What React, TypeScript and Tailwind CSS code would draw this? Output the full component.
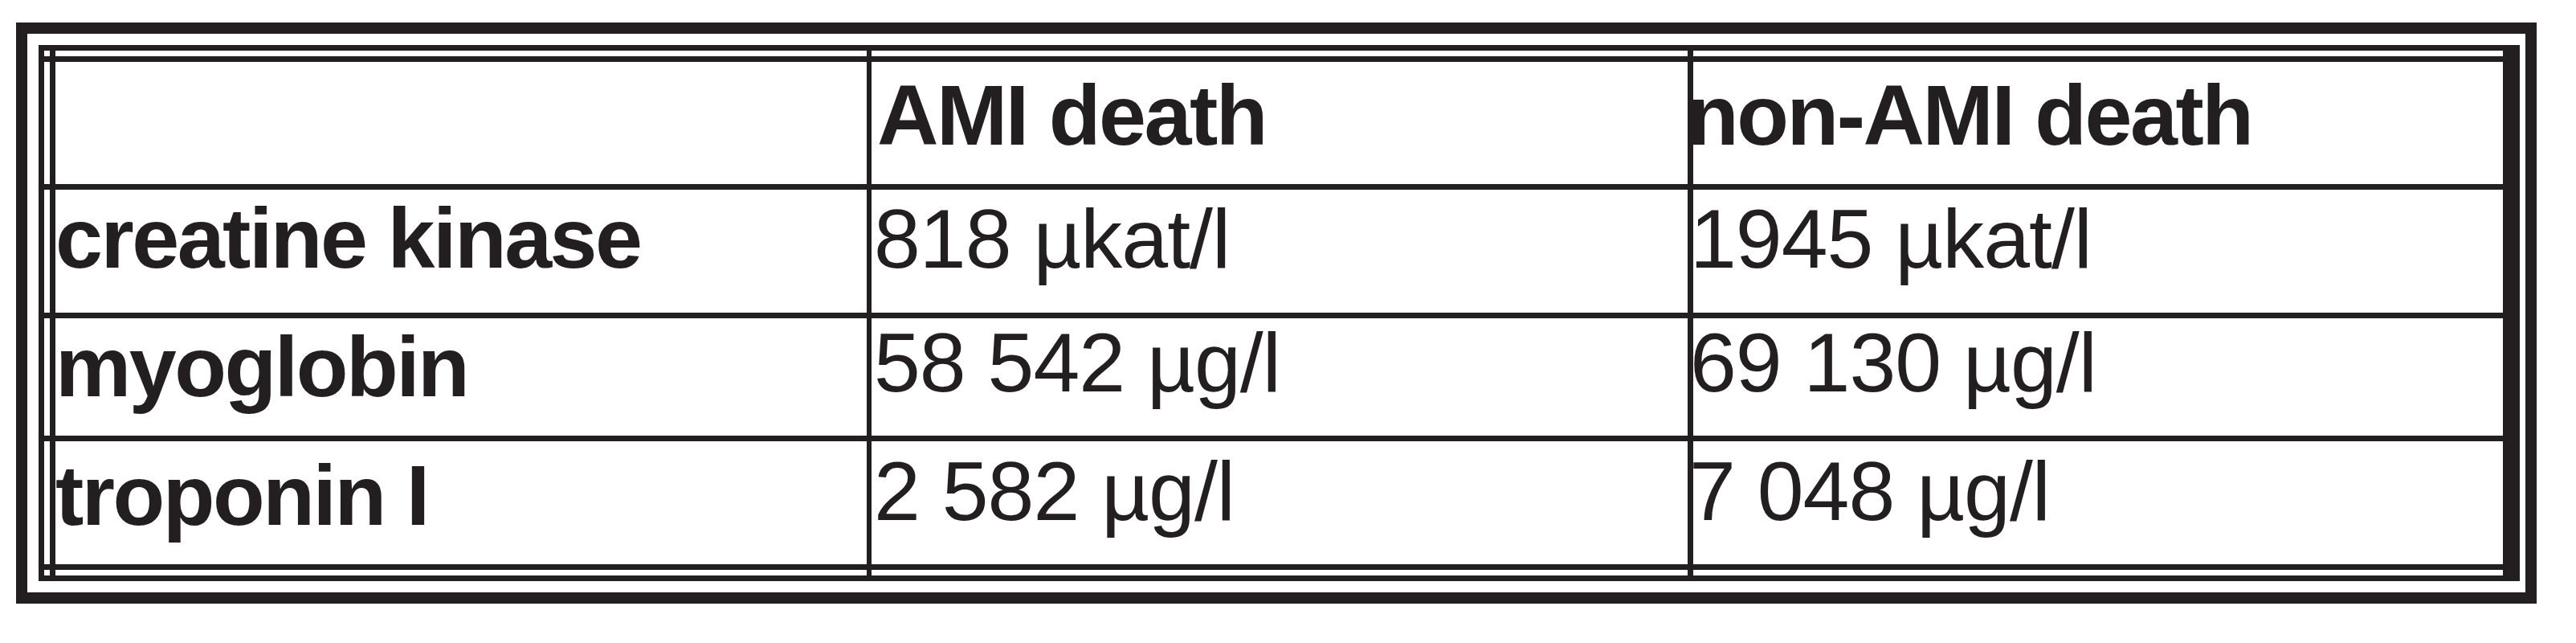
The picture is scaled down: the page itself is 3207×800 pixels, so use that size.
import React from "react";

type Cell = { text: string; bold: boolean; cls: string };

const FONT = "font-['Liberation_Sans',Arial,Helvetica,sans-serif]";

const rows: Cell[][] = [
  [
    { text: "", bold: true, cls: "pt-[13px] pl-0" },
    { text: "AMI death", bold: true, cls: "pt-[13px] pl-[7px]" },
    { text: "non-AMI death", bold: true, cls: "pt-[13px] -ml-[8px]" },
  ],
  [
    { text: "creatine kinase", bold: true, cls: "pt-[7px] pl-0" },
    { text: "818 µkat/l", bold: false, cls: "pt-[9px] pl-[3px]" },
    { text: "1945 µkat/l", bold: false, cls: "pt-[9px] -ml-[4px]" },
  ],
  [
    { text: "myoglobin", bold: true, cls: "pt-[7px] pl-0" },
    { text: "58 542 µg/l", bold: false, cls: "pt-[3px] pl-[3px]" },
    { text: "69 130 µg/l", bold: false, cls: "pt-[3px] -ml-[4px]" },
  ],
  [
    { text: "troponin I", bold: true, cls: "pt-[14px] pl-0" },
    { text: "2 582 µg/l", bold: false, cls: "pt-[10px] pl-[3px]" },
    { text: "7 048 µg/l", bold: false, cls: "pt-[10px] -ml-[5px]" },
  ],
];

function TextCell({ cell }: { cell: Cell }) {
  return (
    <div className="bg-white overflow-visible">
      <div
        className={
          cell.bold
            ? `${cell.cls} whitespace-nowrap text-[106px] leading-none font-bold tracking-[-2.5px] text-[#231f20]`
            : `${cell.cls} whitespace-nowrap text-[104px] leading-none font-normal tracking-[-1px] text-[#231f20]`
        }
      >
        {cell.text}
      </div>
    </div>
  );
}

export default function App() {
  // grid tracks: rows 0 gap,1 line,2 c,3 line,4 c,5 line,6 c,7 line,8 c,9 line,10 gap
  // cols 0 gap,1 line,2 c,3 line,4 c,5 line,6 c
  const gridCells: React.ReactNode[] = [];
  for (let r = 0; r < 11; r++) {
    for (let c = 0; c < 7; c++) {
      const key = `${r}-${c}`;
      const isGapRow = r === 0 || r === 10;
      const isContentRow = r === 2 || r === 4 || r === 6 || r === 8;
      const isContentCol = c === 2 || c === 4 || c === 6;
      if (isGapRow) {
        gridCells.push(
          <div key={key} className={c === 0 || isContentCol ? "bg-white" : ""} />
        );
      } else if (isContentRow) {
        if (c === 0) {
          gridCells.push(<div key={key} className="bg-white" />);
        } else if (isContentCol) {
          const rowIdx = (r - 2) / 2;
          const colIdx = (c - 2) / 2;
          gridCells.push(<TextCell key={key} cell={rows[rowIdx][colIdx]} />);
        } else {
          gridCells.push(<div key={key} />);
        }
      } else {
        gridCells.push(<div key={key} />);
      }
    }
  }

  return (
    <div className={`${FONT} w-[3207px] h-[800px] bg-white pt-[28px] pl-[20px]`}>
      <div className="w-[3138px] h-[723px] border-[14px] border-[#231f20] bg-white pl-[14px] pt-[14px] pr-[7px] pb-[14px]">
        <div className="h-full w-full border-l-[7px] border-t-[7px] border-b-[7px] border-r-[21px] border-[#231f20] bg-[#231f20] grid grid-cols-[7px_7px_1010px_6px_1016px_7px_1008px] grid-rows-[7px_7px_152px_7px_153px_7px_146px_7px_153px_7px_7px]">
          {gridCells}
        </div>
      </div>
    </div>
  );
}
